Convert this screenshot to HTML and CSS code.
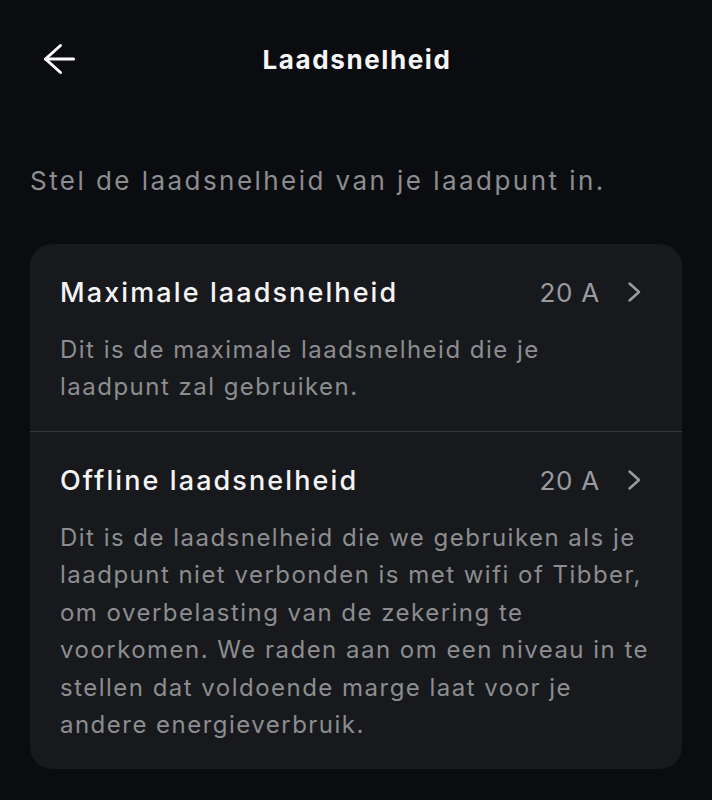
FILE: index.html
```html
<!DOCTYPE html>
<html lang="nl">
<head>
<meta charset="utf-8">
<link rel="stylesheet" href="styles.css">
</head>
<body>
<div class="screen">
  <header class="topbar">
    <button class="back" aria-label="Terug">
      <svg width="32" height="32" viewBox="0 0 32 32" fill="none" stroke="#ffffff" stroke-width="3" stroke-linecap="round" stroke-linejoin="round">
        <path d="M30.5 16H2.5"/>
        <path d="M17.5 2.5L2.5 16l15 13.5"/>
      </svg>
    </button>
    <h1 class="title">Laadsnelheid</h1>
  </header>
  <p class="intro">Stel de laadsnelheid van je laadpunt in.</p>
  <section class="card">
    <div class="row">
      <div class="row-head">
        <span class="row-title">Maximale laadsnelheid</span>
        <span class="row-value">20 A</span>
        <svg class="chev" width="14" height="22" viewBox="0 0 14 22" fill="none" stroke="#9a9ba0" stroke-width="2.5" stroke-linecap="round" stroke-linejoin="round"><path d="M2.5 2.5l9.5 8.5-9.5 8.5"/></svg>
      </div>
      <p class="row-desc">Dit is de maximale laadsnelheid die je laadpunt zal gebruiken.</p>
    </div>
    <div class="row">
      <div class="row-head">
        <span class="row-title">Offline laadsnelheid</span>
        <span class="row-value">20 A</span>
        <svg class="chev" width="14" height="22" viewBox="0 0 14 22" fill="none" stroke="#9a9ba0" stroke-width="2.5" stroke-linecap="round" stroke-linejoin="round"><path d="M2.5 2.5l9.5 8.5-9.5 8.5"/></svg>
      </div>
      <p class="row-desc">Dit is de laadsnelheid die we gebruiken als je laadpunt niet verbonden is met wifi of Tibber, om overbelasting van de zekering te voorkomen. We raden aan om een niveau in te stellen dat voldoende marge laat voor je andere energieverbruik.</p>
    </div>
  </section>
</div>
</body>
</html>
```
FILE: styles.css
```css
* { box-sizing: border-box; }
html, body {
  margin: 0;
  padding: 0;
  background: #0b0c0f;
}
body {
  font-family: "Inter", "Open Sans", sans-serif;
  color: #ffffff;
  width: 712px;
  height: 800px;
  overflow: hidden;
}
.screen {
  padding: 0 30px;
}
.topbar {
  position: relative;
  height: 120px;
  display: flex;
  align-items: center;
  justify-content: center;
}
.back {
  position: absolute;
  left: 13px;
  top: 43px;
  background: none;
  border: 0;
  padding: 0;
  width: 32px;
  height: 32px;
  display: flex;
}
.title {
  margin: 0;
  font-size: 26px;
  font-weight: 700;
  letter-spacing: 1.6px;
  line-height: 1;
  color: #f6f6f7;
  padding-left: 2px;
}
.intro {
  margin: 43px 0 45px;
  font-size: 26px;
  line-height: 36px;
  letter-spacing: 2.45px;
  color: #8c8d91;
  font-weight: 400;
  white-space: nowrap;
}
.card {
  background: #18191c;
  border-radius: 22px;
  overflow: hidden;
}
.row {
  padding: 29px 30px 25.5px;
}
.row + .row {
  border-top: 1.5px solid #36373b;
}
.row-head {
  display: flex;
  align-items: center;
  height: 38px;
}
.row-title {
  flex: 1;
  font-size: 27px;
  font-weight: 500;
  letter-spacing: 2.1px;
  color: #f4f4f5;
}
.row-value {
  font-size: 26px;
  letter-spacing: 0.75px;
  color: #9a9ba0;
  margin-right: 27px;
}
.chev {
  display: block;
  margin-right: 11px;
}
.row-desc {
  margin: 19.5px 0 0;
  font-size: 24px;
  line-height: 37.5px;
  letter-spacing: 1.48px;
  color: #8c8d91;
}
```
